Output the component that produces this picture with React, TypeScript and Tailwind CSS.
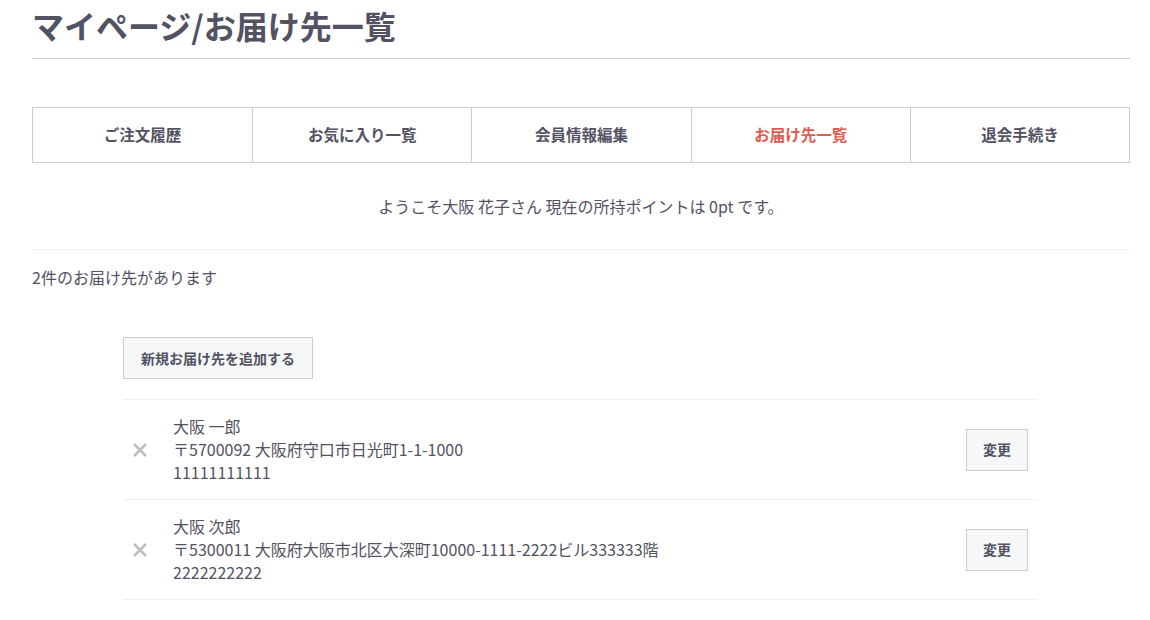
const tabs = [
  { label: "ご注文履歴", active: false },
  { label: "お気に入り一覧", active: false },
  { label: "会員情報編集", active: false },
  { label: "お届け先一覧", active: true },
  { label: "退会手続き", active: false },
];

const addresses = [
  {
    name: "大阪 一郎",
    address: "〒5700092 大阪府守口市日光町1-1-1000",
    phone: "11111111111",
  },
  {
    name: "大阪 次郎",
    address: "〒5300011 大阪府大阪市北区大深町10000-1111-2222ビル333333階",
    phone: "2222222222",
  },
];

function CloseIcon() {
  return (
    <svg width="16" height="14" viewBox="0 0 16 14" className="text-[#bbbec2]">
      <path
        d="M2 1 L14 13 M14 1 L2 13"
        stroke="currentColor"
        strokeWidth="2.6"
        strokeLinecap="butt"
        fill="none"
      />
    </svg>
  );
}

export default function App() {
  return (
    <div
      className="min-h-screen w-full bg-white text-[#525263]"
      style={{ fontFamily: '"Noto Sans CJK JP", "Noto Sans", sans-serif' }}
    >
      <div className="mx-[32px] w-[1098px]">
        <div className="border-b border-[#ccc] pb-[8px]">
          <h1 className="text-[32px] font-bold leading-[50px]">マイページ/お届け先一覧</h1>
        </div>

        <nav className="mt-[48px] grid grid-cols-5 border border-[#ccc]">
          {tabs.map((t, i) => (
            <div
              key={t.label}
              className={`flex h-[54px] items-center justify-center text-[15.5px] font-bold ${
                i > 0 ? "border-l border-[#ccc]" : ""
              } ${t.active ? "text-[#DE5D50]" : "text-[#525263]"}`}
            >
              {t.label}
            </div>
          ))}
        </nav>

        <div className="border-b border-[#f0f0f0] pt-[30px] pb-[30px] text-center text-[16px] leading-[26px]">
          ようこそ大阪 花子さん 現在の所持ポイントは 0pt です。
        </div>

        <p className="mt-[14px] text-[16px] leading-[26px]">2件のお届け先があります</p>

        <div className="ml-[91px] mt-[47px] w-[915px]">
          <button className="h-[42px] border border-[#ccc] bg-[#F5F7F8] px-[17px] text-[14px] font-bold text-[#525263]">
            新規お届け先を追加する
          </button>

          <ul className="mt-[20px] border-t border-[#f0f0f0]">
            {addresses.map((a) => (
              <li
                key={a.name}
                className="flex h-[100px] items-center border-b border-[#f0f0f0]"
              >
                <div className="flex w-[50px] justify-start pl-[9px]">
                  <CloseIcon />
                </div>
                <div className="flex-1 text-[16px] leading-[23px] text-[#525263]">
                  <div>{a.name}</div>
                  <div>{a.address}</div>
                  <div>{a.phone}</div>
                </div>
                <button className="mr-[10px] h-[42px] w-[62px] border border-[#ccc] bg-[#F5F7F8] text-[14px] font-bold text-[#525263]">
                  変更
                </button>
              </li>
            ))}
          </ul>
        </div>
      </div>
    </div>
  );
}
